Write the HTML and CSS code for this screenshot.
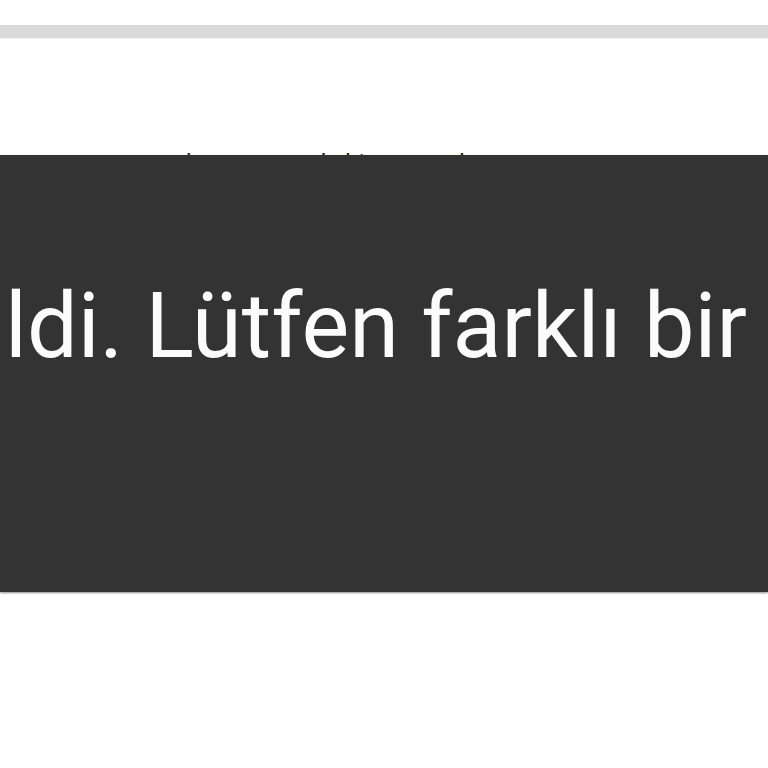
FILE: index.html
```html
<!DOCTYPE html>
<html lang="tr">
<head>
<meta charset="utf-8">
<title>Kayıt</title>
<link rel="stylesheet" href="styles.css">
</head>
<body>
<div class="topbar"></div>
<main class="content">
  <h1 class="title">kayıt sırasında bir sorun oluştu</h1>
</main>
<div class="toast" role="alert">
  <div class="toast-line">
    <span class="pre"><span class="pre-text">Bu e-posta adresi daha önce kaydedi</span></span><span class="msg">ldi. Lütfen farklı bir e-posta adresi deneyin.</span>
  </div>
</div>
</body>
</html>
```
FILE: styles.css
```css
html, body {
  margin: 0;
  padding: 0;
  background: #ffffff;
  font-family: Roboto, "Liberation Sans", sans-serif;
}
body {
  width: 768px;
  height: 768px;
  overflow: hidden;
  position: relative;
}
.topbar {
  margin-top: 25px;
  height: 13px;
  background: #d9d9d9;
  border-bottom: 1px solid #f4f4f4;
}
.content {
  padding-top: 112px;
}
.title {
  margin: 0 0 0 186px;
  font-size: 24px;
  line-height: 1;
  font-weight: 400;
  color: #212121;
  white-space: nowrap;
}
.toast {
  position: absolute;
  top: 155px;
  left: 0;
  width: 100%;
  height: 437px;
  background: #333333;
  box-shadow: 0 1px 2px rgba(0, 0, 0, 0.45);
  overflow: hidden;
}
.toast-line {
  display: flex;
  padding-top: 127px;
  font-size: 90px;
  line-height: 1;
  color: #fbfbfb;
  white-space: nowrap;
}
.pre {
  display: flex;
  justify-content: flex-end;
  width: 5px;
  flex: none;
}
.pre-text {
  flex: none;
}
.msg {
  flex: none;
}
```
